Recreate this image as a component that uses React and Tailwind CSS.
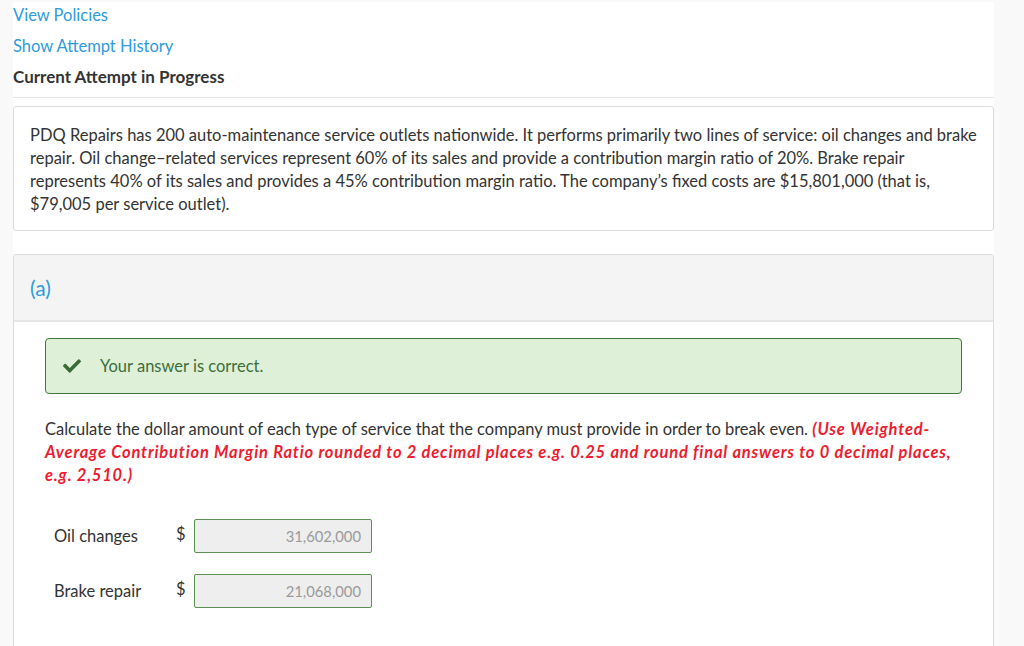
import { useState } from "react";

const rows = [
  { label: "Oil changes", value: "31,602,000" },
  { label: "Brake repair", value: "21,068,000" },
];

function CheckIcon() {
  return (
    <svg viewBox="0 0 512 512" className="h-[18px] w-[18px]" fill="#3a6b37">
      <path d="M173.9 439.4l-166.4-166.4c-10-10-10-26.2 0-36.2l36.2-36.2c10-10 26.2-10 36.2 0L192 312.7 432.1 72.6c10-10 26.2-10 36.2 0l36.2 36.2c10 10 10 26.2 0 36.2L210.1 439.4c-10 10-26.2 10-36.2 0z" />
    </svg>
  );
}

function AnswerRow({ label, value }) {
  return (
    <div className="flex h-[34px] items-center">
      <span className="w-[131px] pl-[9px] text-[16.5px] text-[#333]">{label}</span>
      <span className="w-[18px] -translate-y-[2px] text-[16.5px] text-[#333]">$</span>
      <div className="flex h-[34px] w-[178px] items-center justify-end rounded-[2px] border border-[#5b8f52] bg-[#eeeeee] pr-[10px] text-[14.8px] text-[#9a9a9a]">
        {value}
      </div>
    </div>
  );
}

export default function App() {
  const [open] = useState(true);

  return (
    <div className="h-[646px] overflow-hidden bg-[#f9f9f9] pt-[2px] font-['Lato','Liberation_Sans',sans-serif]">
      <div className="ml-[13px] w-[981px] bg-white">
        <div className="flex flex-col">
          <a className="flex h-[26px] items-center text-[16.5px] text-[#2d9be0]">View Policies</a>
          <a className="mt-[5px] flex h-[26px] items-center text-[16.5px] text-[#2d9be0]">
            Show Attempt History
          </a>
          <div className="mt-[5px] flex h-[26px] items-center text-[17px] font-bold text-[#333]">
            Current Attempt in Progress
          </div>
        </div>
        <div className="mt-[7px] border-t border-[#e6e6e6]" />

        <div className="mt-[8px] rounded-[3px] border border-[#dcdcdc] px-[16px] pb-[14px] pt-[17px] text-[16.5px] leading-[23px] text-[#333]">
          PDQ Repairs has 200 auto-maintenance service outlets nationwide. It performs primarily two
          lines of service: oil changes and brake repair. Oil change–related services represent 60% of
          its sales and provide a contribution margin ratio of 20%. Brake repair represents 40% of its
          sales and provides a 45% contribution margin ratio. The company’s fixed costs are $15,801,000
          (that is, $79,005 per service outlet).
        </div>

        <div className="mt-[23px] rounded-t-[3px] border border-b-0 border-[#dcdcdc]">
          <div className="flex h-[67px] items-center border-b-2 border-[#e6e6e6] bg-[#f4f4f4] pl-[16px] text-[21px] text-[#2d9be0]">
            (a)
          </div>
          {open && (
            <div className="px-[31px] pb-[80px] pt-[16px]">
              <div className="flex h-[56px] items-center rounded-[4px] border border-[#3f7a3a] bg-[#dff0d8] pl-[17px]">
                <CheckIcon />
                <span className="ml-[19px] text-[16.5px] text-[#3d6e3a]">Your answer is correct.</span>
              </div>

              <p className="mt-[24px] text-[16.5px] leading-[23px] text-[#333]">
                Calculate the dollar amount of each type of service that the company must provide in
                order to break even.{" "}
                <span className="font-bold italic tracking-[0.8px] text-[#ee1c2e]">
                  (Use Weighted-Average Contribution Margin Ratio rounded to 2 decimal places e.g. 0.25
                  and round final answers to 0 decimal places, e.g. 2,510.)
                </span>
              </p>

              <div className="mt-[32px] flex flex-col gap-[21px]">
                {rows.map((row) => (
                  <AnswerRow key={row.label} {...row} />
                ))}
              </div>
            </div>
          )}
        </div>
      </div>
    </div>
  );
}
